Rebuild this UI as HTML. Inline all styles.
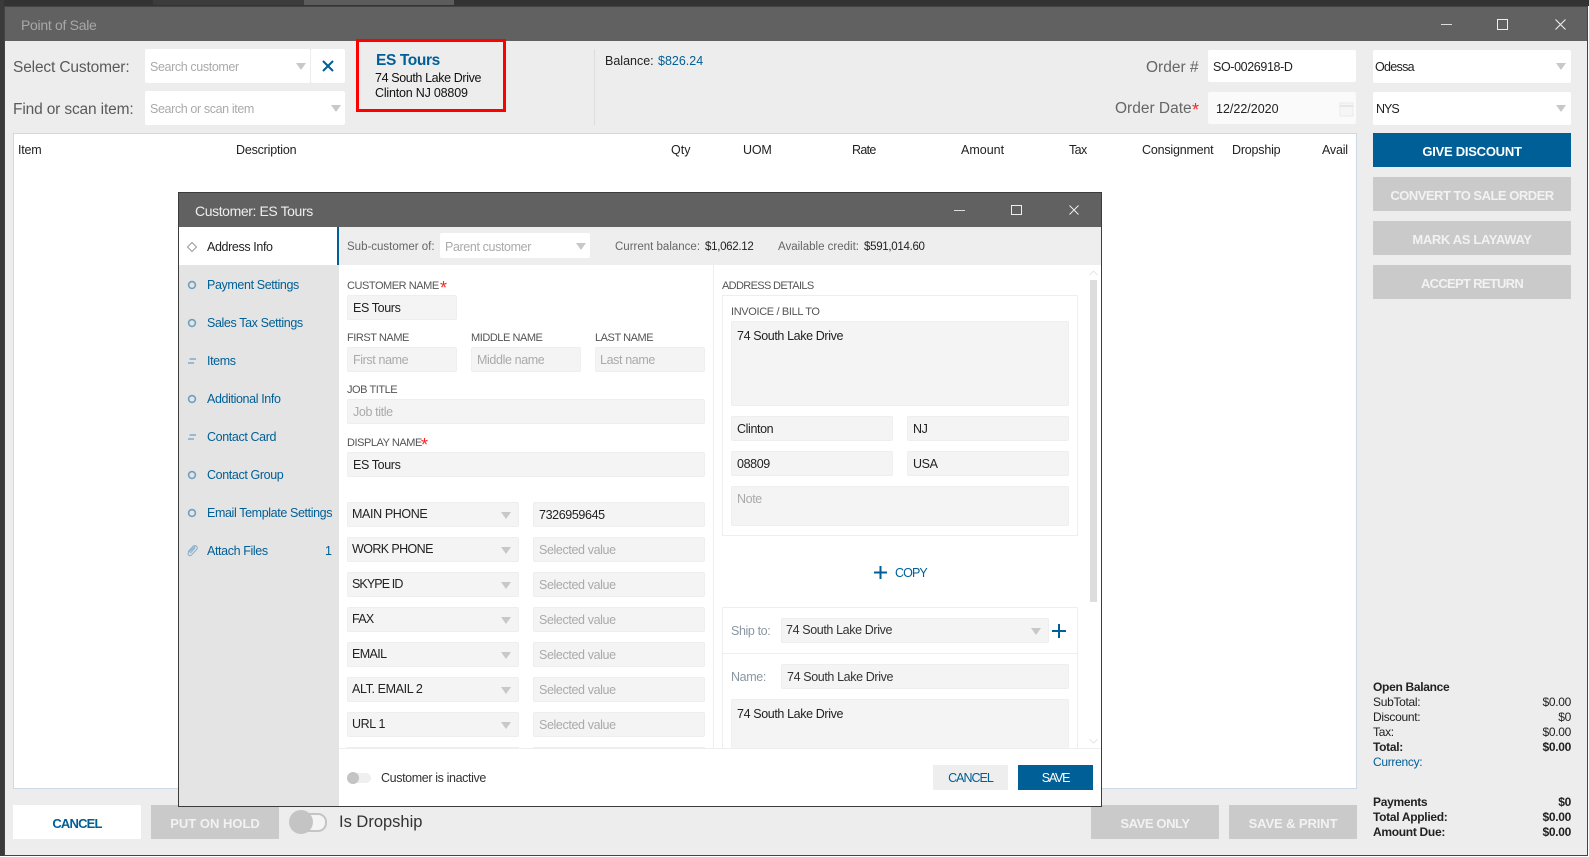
<!DOCTYPE html>
<html><head><meta charset="utf-8"><title>Point of Sale</title>
<style>
html,body{margin:0;padding:0;background:#fff}
#r{position:relative;width:1589px;height:857px;overflow:hidden;background:#fff;font-family:"Liberation Sans",sans-serif;font-size:12.5px;color:#222;letter-spacing:-.38px}
#r div{position:absolute;box-sizing:border-box}
.t{white-space:nowrap;line-height:16px;height:16px}
.b{color:#005f96}
.lb{font-size:11px;color:#555;letter-spacing:-.45px}
.ph{color:#aaa}
.i{background:#f4f4f4;border:1px solid #eee;border-radius:2px;height:25px}
.w{background:#fff;border-radius:2px}
.a{width:0;height:0;border-left:5px solid transparent;border-right:5px solid transparent;border-top:7px solid #c8c8c8}
.btn{background:#cacaca;color:#f2f2f2;font-weight:bold;font-size:13px;text-align:center;line-height:38px;height:34px;white-space:nowrap;letter-spacing:-.4px;overflow:hidden}
.r{text-align:right;left:1450px;width:121px}
.s{font-size:12px;color:#222;letter-spacing:-.3px}
.bd{font-weight:bold}
.st{color:#f22;font-size:18px;letter-spacing:0}
.big{font-size:15.5px;color:#5a5a5a;letter-spacing:-.15px}
.h{letter-spacing:-.2px}
</style></head><body><div id="r">

<div style="left:0;top:0;width:1589px;height:6px;background:#333"></div>
<div style="left:153px;top:0;width:151px;height:5px;background:#3c3c3c"></div>
<div style="left:304px;top:0;width:150px;height:5px;background:#5c5c5c"></div>
<div style="left:0;top:0;width:4px;height:856px;background:#3a3a3a"></div>
<div style="left:4px;top:6px;width:1584px;height:850px;background:#ededed;border:1px solid #444;border-top:1px solid #444"></div>
<div style="left:5px;top:7px;width:1582px;height:34px;background:#616161"></div>
<div class="t" style="left:21px;top:17px;font-size:14px;color:#a8a8a8;letter-spacing:-.3px">Point of Sale</div>
<div style="left:1441px;top:24px;width:11px;height:1px;background:#ddd"></div>
<div style="left:1497px;top:19px;width:11px;height:11px;border:1px solid #eee"></div>
<svg style="position:absolute;left:1555px;top:19px" width="11" height="11"><path d="M0.5 0.5L10.5 10.5M10.5 0.5L0.5 10.5" stroke="#eee" stroke-width="1.1" fill="none"/></svg>

<div class="t big" style="left:13px;top:60px">Select Customer:</div>
<div class="t big" style="left:13px;top:102px">Find or scan item:</div>
<div class="w" style="left:145px;top:49px;width:165px;height:34px"></div>
<div class="t ph" style="left:150px;top:59px">Search customer</div>
<div class="a" style="left:296px;top:63px"></div>
<div class="w" style="left:311px;top:49px;width:34px;height:34px"></div>
<svg style="position:absolute;left:322px;top:60px" width="12" height="12"><path d="M1 1L11 11M11 1L1 11" stroke="#005f96" stroke-width="2" fill="none"/></svg>
<div class="w" style="left:145px;top:91px;width:200px;height:34px"></div>
<div class="t ph" style="left:150px;top:101px">Search or scan item</div>
<div class="a" style="left:331px;top:105px"></div>

<div style="left:356px;top:39px;width:150px;height:73px;border:3px solid #f00"></div>
<div class="t b bd" style="left:376px;top:53px;font-size:15.5px">ES Tours</div>
<div class="t" style="left:375px;top:70px;color:#111">74 South Lake Drive</div>
<div class="t" style="left:375px;top:85px;color:#111;letter-spacing:-.2px">Clinton NJ 08809</div>
<div style="left:594px;top:49px;width:1px;height:76px;background:#ddd"></div>
<div class="t" style="left:605px;top:53px;letter-spacing:0">Balance:</div>
<div class="t b" style="left:658px;top:53px;letter-spacing:0">$826.24</div>

<div class="t big" style="left:1146px;top:60px;color:#666;letter-spacing:0">Order #</div>
<div class="t big" style="left:1115px;top:101px;color:#666;letter-spacing:0">Order Date</div>
<div class="t st" style="left:1192px;top:102px">*</div>
<div class="w" style="left:1208px;top:50px;width:148px;height:32px"></div>
<div class="t" style="left:1213px;top:59px">SO-0026918-D</div>
<div class="w" style="left:1208px;top:92px;width:148px;height:32px;background:#fafafa"></div>
<div class="t" style="left:1216px;top:101px;letter-spacing:0">12/22/2020</div>
<svg style="position:absolute;left:1339px;top:100px" width="15" height="17"><path d="M1 3H14V16H1Z" fill="#f6f6f6" stroke="#e9e9e9"/><path d="M1 6H14" stroke="#e6e6e6" stroke-width="2"/></svg>
<div class="w" style="left:1373px;top:50px;width:198px;height:33px"></div>
<div class="t" style="left:1375px;top:59px;letter-spacing:-.7px">Odessa</div>
<div class="a" style="left:1556px;top:63px"></div>
<div class="w" style="left:1373px;top:92px;width:198px;height:33px"></div>
<div class="t" style="left:1376px;top:101px;letter-spacing:-1px">NYS</div>
<div class="a" style="left:1556px;top:105px"></div>

<div class="btn" style="left:1373px;top:133px;width:198px;background:#005f96;color:#fff;letter-spacing:-.25px">GIVE DISCOUNT</div>
<div class="btn" style="left:1373px;top:177px;width:198px;letter-spacing:-.5px">CONVERT TO SALE ORDER</div>
<div class="btn" style="left:1373px;top:221px;width:198px;letter-spacing:-.35px">MARK AS LAYAWAY</div>
<div class="btn" style="left:1373px;top:265px;width:198px;letter-spacing:-.7px">ACCEPT RETURN</div>

<div style="left:13px;top:133px;width:1344px;height:656px;background:#fff;border:1px solid #cdd9e5"></div>
<div class="t h" style="left:18px;top:142px">Item</div>
<div class="t h" style="left:236px;top:142px">Description</div>
<div class="t" style="left:671px;top:142px;letter-spacing:0">Qty</div>
<div class="t" style="left:743px;top:142px;letter-spacing:-.2px">UOM</div>
<div class="t" style="left:852px;top:142px;letter-spacing:-.7px">Rate</div>
<div class="t" style="left:961px;top:142px;letter-spacing:0">Amount</div>
<div class="t" style="left:1069px;top:142px;letter-spacing:-.6px">Tax</div>
<div class="t h" style="left:1142px;top:142px">Consignment</div>
<div class="t h" style="left:1232px;top:142px">Dropship</div>
<div class="t h" style="left:1322px;top:142px">Avail</div>

<div class="t s bd" style="left:1373px;top:679px">Open Balance</div>
<div class="t s" style="left:1373px;top:694px">SubTotal:</div><div class="t s r" style="top:694px">$0.00</div>
<div class="t s" style="left:1373px;top:709px">Discount:</div><div class="t s r" style="top:709px">$0</div>
<div class="t s" style="left:1373px;top:724px">Tax:</div><div class="t s r" style="top:724px">$0.00</div>
<div class="t s bd" style="left:1373px;top:739px">Total:</div><div class="t s r bd" style="top:739px">$0.00</div>
<div class="t s b" style="left:1373px;top:754px;color:#005f96">Currency:</div>
<div class="t s bd" style="left:1373px;top:794px">Payments</div><div class="t s r bd" style="top:794px">$0</div>
<div class="t s bd" style="left:1373px;top:809px">Total Applied:</div><div class="t s r bd" style="top:809px">$0.00</div>
<div class="t s bd" style="left:1373px;top:824px">Amount Due:</div><div class="t s r bd" style="top:824px">$0.00</div>

<div class="btn" style="left:13px;top:805px;width:128px;background:#fff;color:#005f96;letter-spacing:-.8px">CANCEL</div>
<div class="btn" style="left:151px;top:805px;width:128px;letter-spacing:0">PUT ON HOLD</div>
<div style="left:300px;top:813px;width:27px;height:19px;border:2px solid #c4c4c4;border-radius:9px;background:#f4f4f4"></div>
<div style="left:289px;top:810px;width:24px;height:24px;border-radius:12px;background:#c4c4c4"></div>
<div class="t" style="left:339px;top:814px;font-size:16.5px;color:#333;letter-spacing:0">Is Dropship</div>
<div class="btn" style="left:1091px;top:805px;width:128px">SAVE ONLY</div>
<div class="btn" style="left:1229px;top:805px;width:128px;letter-spacing:-.1px">SAVE &amp; PRINT</div>

<div style="left:178px;top:192px;width:924px;height:615px;background:#fff;border:1px solid #3c3c3c"></div>
<div style="left:179px;top:193px;width:922px;height:34px;background:#616161"></div>
<div class="t" style="left:195px;top:203px;font-size:14px;color:#eee;letter-spacing:-.4px">Customer: ES Tours</div>
<div style="left:954px;top:210px;width:11px;height:1px;background:#ddd"></div>
<div style="left:1011px;top:205px;width:11px;height:10px;border:1px solid #eee"></div>
<svg style="position:absolute;left:1069px;top:205px" width="10" height="10"><path d="M0.5 0.5L9.5 9.5M9.5 0.5L0.5 9.5" stroke="#eee" stroke-width="1" fill="none"/></svg>

<div style="left:179px;top:227px;width:160px;height:579px;background:#e4e4e4"></div>
<div style="left:179px;top:227px;width:160px;height:38px;background:#fff;border-right:2px solid #005f96"></div>
<div style="left:339px;top:227px;width:762px;height:38px;background:#eee"></div>
<svg style="position:absolute;left:186px;top:241px" width="12" height="12"><path d="M6 1.5L10.5 6L6 10.5L1.5 6Z" fill="none" stroke="#999" stroke-width="1"/></svg>
<div class="t" style="left:207px;top:239px;color:#222">Address Info</div>
<svg style="position:absolute;left:187px;top:280px" width="10" height="10"><circle cx="5" cy="5" r="3.4" fill="none" stroke="#6f9fc0" stroke-width="1.6"/></svg>
<div class="t b" style="left:207px;top:277px">Payment Settings</div>
<svg style="position:absolute;left:187px;top:318px" width="10" height="10"><circle cx="5" cy="5" r="3.4" fill="none" stroke="#6f9fc0" stroke-width="1.6"/></svg>
<div class="t b" style="left:207px;top:315px">Sales Tax Settings</div>
<svg style="position:absolute;left:187px;top:356px" width="10" height="10"><path d="M2.5 3H9M1 7H7" stroke="#6f9fc0" stroke-width="1.2" fill="none"/></svg>
<div class="t b" style="left:207px;top:353px">Items</div>
<svg style="position:absolute;left:187px;top:394px" width="10" height="10"><circle cx="5" cy="5" r="3.4" fill="none" stroke="#6f9fc0" stroke-width="1.6"/></svg>
<div class="t b" style="left:207px;top:391px">Additional Info</div>
<svg style="position:absolute;left:187px;top:432px" width="10" height="10"><path d="M2.5 3H9M1 7H7" stroke="#6f9fc0" stroke-width="1.2" fill="none"/></svg>
<div class="t b" style="left:207px;top:429px">Contact Card</div>
<svg style="position:absolute;left:187px;top:470px" width="10" height="10"><circle cx="5" cy="5" r="3.4" fill="none" stroke="#6f9fc0" stroke-width="1.6"/></svg>
<div class="t b" style="left:207px;top:467px">Contact Group</div>
<svg style="position:absolute;left:187px;top:508px" width="10" height="10"><circle cx="5" cy="5" r="3.4" fill="none" stroke="#6f9fc0" stroke-width="1.6"/></svg>
<div class="t b" style="left:207px;top:505px">Email Template Settings</div>
<svg style="position:absolute;left:186px;top:544px" width="12" height="14"><path d="M10 1.5L3 8C0.8 10.5 3.5 13 5.5 11L11 5C12 3 9.5 0.5 7.2 2.2L2 7.8M9 3.8L4.2 9.2" fill="none" stroke="#8db2cc" stroke-width="1.1"/></svg>
<div class="t b" style="left:207px;top:543px">Attach Files</div>
<div class="t b" style="left:325px;top:543px">1</div>

<div class="t" style="left:347px;top:239px;font-size:11.5px;color:#666;letter-spacing:0">Sub-customer of:</div>
<div class="w" style="left:440px;top:233px;width:150px;height:25px"></div>
<div class="t ph" style="left:445px;top:239px">Parent customer</div>
<div class="a" style="left:576px;top:243px"></div>
<div class="t" style="left:615px;top:239px;font-size:11.5px;color:#666;letter-spacing:0">Current balance:</div>
<div class="t" style="left:705px;top:239px;font-size:11.5px;letter-spacing:-.3px">$1,062.12</div>
<div class="t" style="left:778px;top:239px;font-size:11.5px;color:#666;letter-spacing:0">Available credit:</div>
<div class="t" style="left:864px;top:239px;font-size:11.5px;letter-spacing:-.3px">$591,014.60</div>

<div class="t lb" style="left:347px;top:278px">CUSTOMER NAME</div><div class="t st" style="left:440px;top:280px">*</div>
<div class="i" style="left:347px;top:295px;width:110px"></div><div class="t" style="left:353px;top:300px">ES Tours</div>
<div class="t lb" style="left:347px;top:330px">FIRST NAME</div>
<div class="t lb" style="left:471px;top:330px">MIDDLE NAME</div>
<div class="t lb" style="left:595px;top:330px">LAST NAME</div>
<div class="i" style="left:347px;top:347px;width:110px"></div><div class="t ph" style="left:353px;top:352px">First name</div>
<div class="i" style="left:471px;top:347px;width:110px"></div><div class="t ph" style="left:477px;top:352px">Middle name</div>
<div class="i" style="left:595px;top:347px;width:110px"></div><div class="t ph" style="left:600px;top:352px">Last name</div>
<div class="t lb" style="left:347px;top:382px">JOB TITLE</div>
<div class="i" style="left:347px;top:399px;width:358px"></div><div class="t ph" style="left:353px;top:404px">Job title</div>
<div class="t lb" style="left:347px;top:435px">DISPLAY NAME</div><div class="t st" style="left:421px;top:437px">*</div>
<div class="i" style="left:347px;top:452px;width:358px"></div><div class="t" style="left:353px;top:457px">ES Tours</div>

<div class="i" style="left:347px;top:502px;width:172px"></div><div class="t" style="left:352px;top:506px">MAIN PHONE</div><div class="a" style="left:501px;top:512px"></div>
<div class="i" style="left:533px;top:502px;width:172px"></div><div class="t" style="left:539px;top:507px">7326959645</div>
<div class="i" style="left:347px;top:537px;width:172px"></div><div class="t" style="left:352px;top:541px;letter-spacing:-.6px">WORK PHONE</div><div class="a" style="left:501px;top:547px"></div>
<div class="i" style="left:533px;top:537px;width:172px"></div><div class="t ph" style="left:539px;top:542px">Selected value</div>
<div class="i" style="left:347px;top:572px;width:172px"></div><div class="t" style="left:352px;top:576px;letter-spacing:-.9px">SKYPE ID</div><div class="a" style="left:501px;top:582px"></div>
<div class="i" style="left:533px;top:572px;width:172px"></div><div class="t ph" style="left:539px;top:577px">Selected value</div>
<div class="i" style="left:347px;top:607px;width:172px"></div><div class="t" style="left:352px;top:611px;letter-spacing:-.7px">FAX</div><div class="a" style="left:501px;top:617px"></div>
<div class="i" style="left:533px;top:607px;width:172px"></div><div class="t ph" style="left:539px;top:612px">Selected value</div>
<div class="i" style="left:347px;top:642px;width:172px"></div><div class="t" style="left:352px;top:646px;letter-spacing:-.6px">EMAIL</div><div class="a" style="left:501px;top:652px"></div>
<div class="i" style="left:533px;top:642px;width:172px"></div><div class="t ph" style="left:539px;top:647px">Selected value</div>
<div class="i" style="left:347px;top:677px;width:172px"></div><div class="t" style="left:352px;top:681px">ALT. EMAIL 2</div><div class="a" style="left:501px;top:687px"></div>
<div class="i" style="left:533px;top:677px;width:172px"></div><div class="t ph" style="left:539px;top:682px">Selected value</div>
<div class="i" style="left:347px;top:712px;width:172px"></div><div class="t" style="left:352px;top:716px">URL 1</div><div class="a" style="left:501px;top:722px"></div>
<div class="i" style="left:533px;top:712px;width:172px"></div><div class="t ph" style="left:539px;top:717px">Selected value</div>
<div style="left:347px;top:747px;width:172px;height:1px;background:#eee"></div>
<div style="left:533px;top:747px;width:172px;height:1px;background:#eee"></div>

<div style="left:713px;top:265px;width:1px;height:483px;background:#eee"></div>
<div class="t lb" style="left:722px;top:278px;letter-spacing:-.65px">ADDRESS DETAILS</div>
<div style="left:722px;top:295px;width:356px;height:241px;border:1px solid #eee"></div>
<div class="t lb" style="left:731px;top:304px;letter-spacing:-.35px">INVOICE / BILL TO</div>
<div class="i" style="left:731px;top:321px;width:338px;height:85px"></div><div class="t" style="left:737px;top:328px">74 South Lake Drive</div>
<div class="i" style="left:731px;top:416px;width:162px"></div><div class="t" style="left:737px;top:421px">Clinton</div>
<div class="i" style="left:907px;top:416px;width:162px"></div><div class="t" style="left:913px;top:421px">NJ</div>
<div class="i" style="left:731px;top:451px;width:162px"></div><div class="t" style="left:737px;top:456px">08809</div>
<div class="i" style="left:907px;top:451px;width:162px"></div><div class="t" style="left:913px;top:456px">USA</div>
<div class="i" style="left:731px;top:486px;width:338px;height:40px"></div><div class="t ph" style="left:737px;top:491px">Note</div>
<svg style="position:absolute;left:874px;top:566px" width="13" height="13"><path d="M6.5 0V13M0 6.5H13" stroke="#005f96" stroke-width="2"/></svg>
<div class="t b" style="left:895px;top:565px;letter-spacing:-.9px">COPY</div>

<div style="left:722px;top:607px;width:356px;height:141px;border:1px solid #eee;border-bottom:0"></div>
<div class="t" style="left:731px;top:623px;color:#8a97a2">Ship to:</div>
<div class="i" style="left:781px;top:618px;width:268px"></div><div class="t" style="left:786px;top:622px;color:#333">74 South Lake Drive</div>
<div class="a" style="left:1031px;top:628px"></div>
<svg style="position:absolute;left:1052px;top:624px" width="14" height="14"><path d="M7 0V14M0 7H14" stroke="#005f96" stroke-width="2"/></svg>
<div style="left:722px;top:653px;width:356px;height:1px;background:#eee"></div>
<div class="t" style="left:731px;top:669px;color:#8a97a2">Name:</div>
<div class="i" style="left:781px;top:664px;width:288px"></div><div class="t" style="left:787px;top:669px;color:#333">74 South Lake Drive</div>
<div class="i" style="left:731px;top:699px;width:338px;height:49px;border-bottom:0"></div><div class="t" style="left:737px;top:706px">74 South Lake Drive</div>

<div style="left:1090px;top:280px;width:7px;height:322px;background:#ddd"></div>
<svg style="position:absolute;left:1089px;top:270px" width="9" height="6"><path d="M0.5 5L4.5 1L8.5 5" fill="none" stroke="#e6e6e6"/></svg>
<svg style="position:absolute;left:1089px;top:738px" width="9" height="6"><path d="M0.5 1L4.5 5L8.5 1" fill="none" stroke="#e6e6e6"/></svg>

<div style="left:339px;top:748px;width:762px;height:1px;background:#eee"></div>
<div style="left:347px;top:773px;width:24px;height:10px;border-radius:5px;background:#efefef"></div>
<div style="left:347px;top:772px;width:12px;height:12px;border-radius:6px;background:#c4c4c4"></div>
<div class="t" style="left:381px;top:770px;color:#333">Customer is inactive</div>
<div style="left:933px;top:765px;width:75px;height:25px;background:#eee;color:#005f96;text-align:center;line-height:27px;letter-spacing:-1px">CANCEL</div>
<div style="left:1018px;top:765px;width:75px;height:25px;background:#005f96;color:#fff;text-align:center;line-height:27px;letter-spacing:-1.2px">SAVE</div>

</div></body></html>
